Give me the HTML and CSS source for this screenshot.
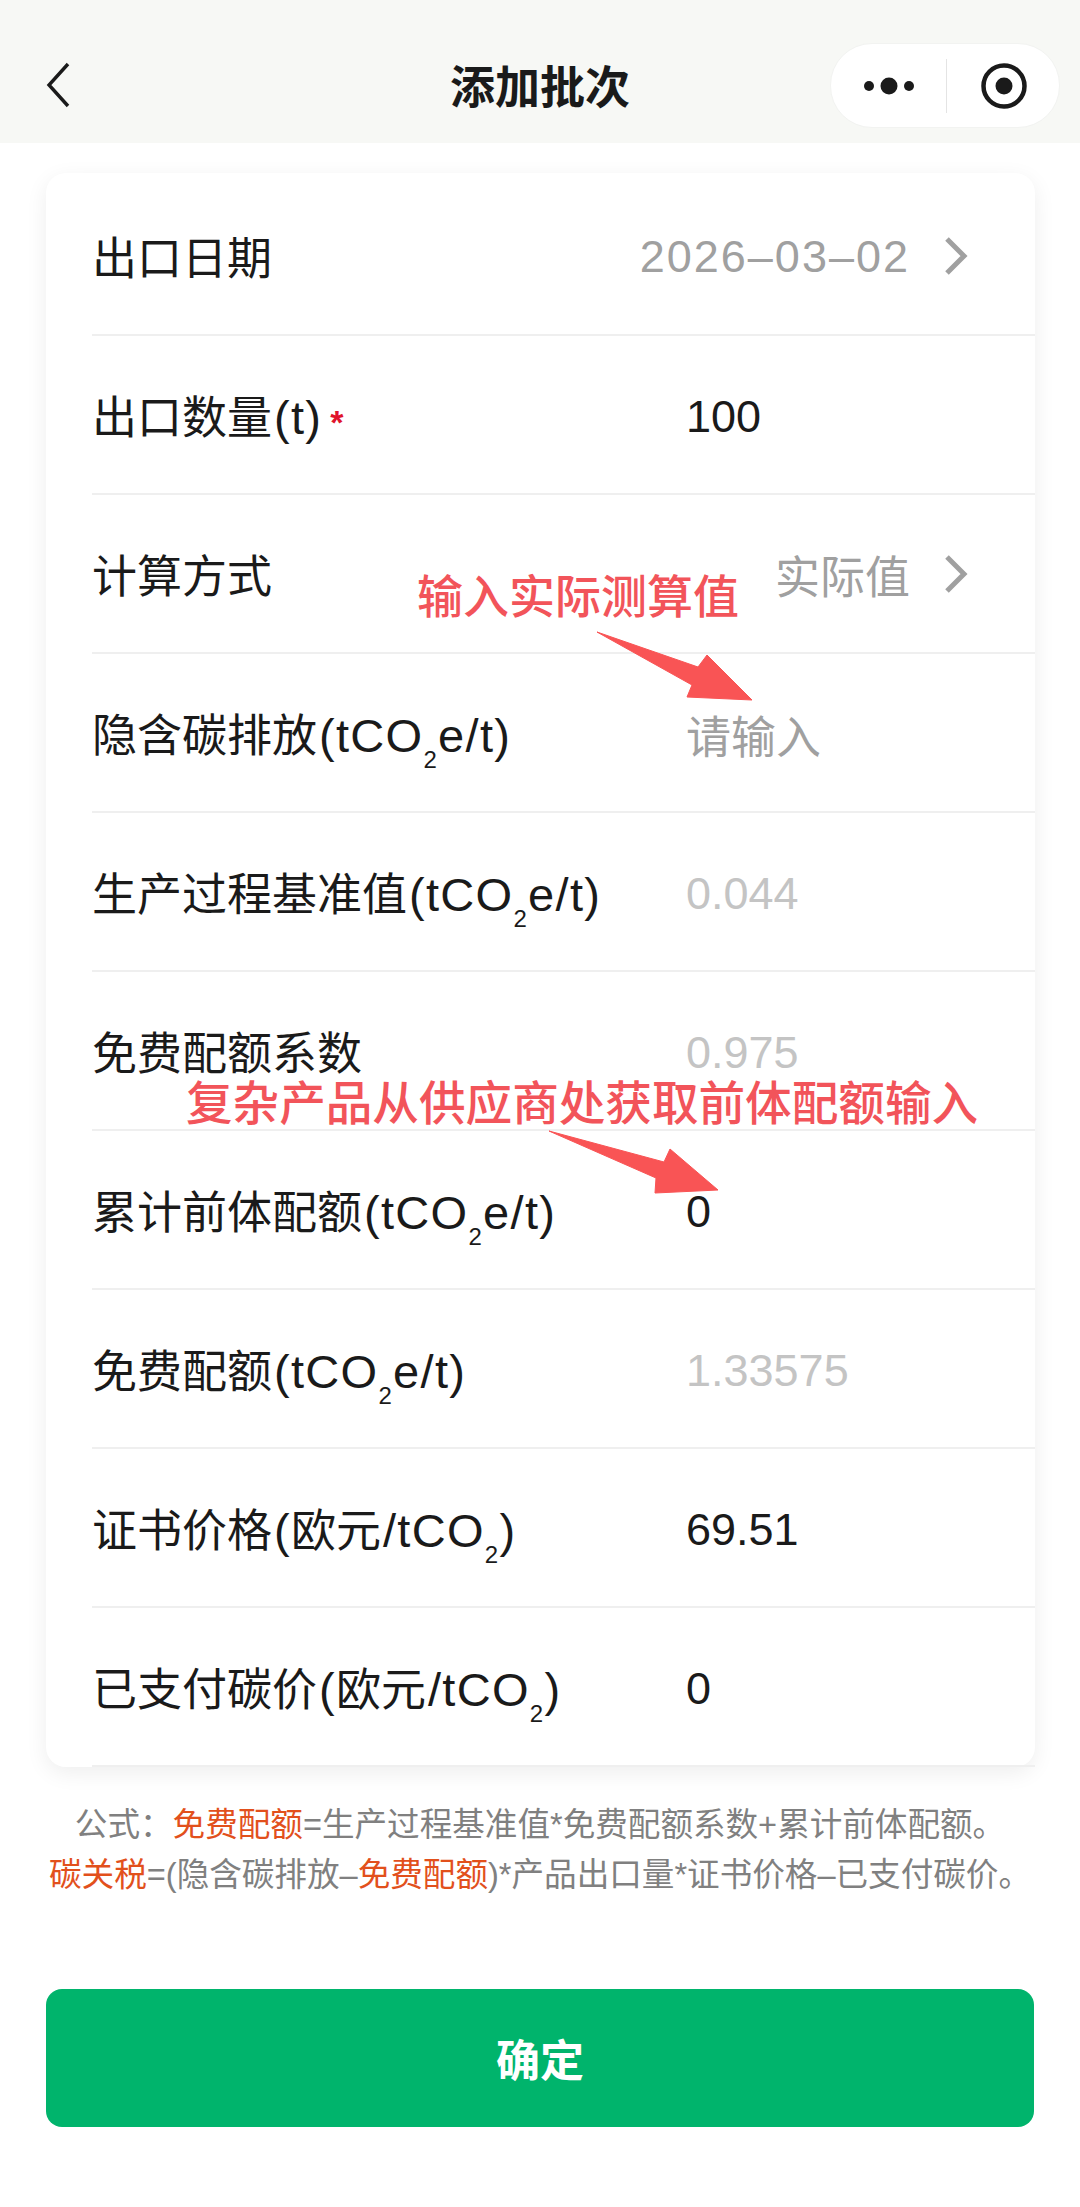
FILE: index.html
```html
<!DOCTYPE html>
<html lang="zh-CN">
<head>
    <meta charset="UTF-8">
    <meta name="viewport" content="width=device-width, initial-scale=1.0">
    <title>添加批次</title>
    <link rel="stylesheet" href="styles.css">
</head>
<body>
    <div class="page">
        <!-- Mini program title bar -->
        <header class="navbar">
            <svg class="back-icon" width="24" height="46" viewBox="0 0 24 46">
                <path d="M22 2 L3 23 L22 44" fill="none" stroke="#1a1a1a" stroke-width="3.4"/>
            </svg>
            <h1>添加批次</h1>
            <div class="capsule">
                <svg class="capsule-more" width="50" height="20" viewBox="0 0 50 20">
                    <circle cx="5" cy="10" r="5" fill="#1a1a1a"/>
                    <circle cx="25" cy="10" r="8.5" fill="#1a1a1a"/>
                    <circle cx="45" cy="10" r="5" fill="#1a1a1a"/>
                </svg>
                <span class="capsule-line"></span>
                <svg class="capsule-close" width="46" height="46" viewBox="0 0 46 46">
                    <circle cx="23" cy="23" r="20.5" fill="none" stroke="#1a1a1a" stroke-width="4.5"/>
                    <circle cx="23" cy="23" r="8.5" fill="#1a1a1a"/>
                </svg>
            </div>
        </header>

        <!-- Batch form -->
        <section class="card">
            <div class="row row-picker">
                <span class="label">出口日期</span>
                <span class="value muted date">2026–03–02</span>
                <svg class="chevron" width="26" height="38" viewBox="0 0 26 38">
                    <path d="M4 2 L21 19 L4 36" fill="none" stroke="#a0a0a0" stroke-width="5"/>
                </svg>
            </div>
            <div class="row">
                <span class="label">出口数量<span class="unit">(t)</span><em class="required">*</em></span>
                <span class="value">100</span>
            </div>
            <div class="row row-picker">
                <span class="label">计算方式</span>
                <span class="value muted">实际值</span>
                <svg class="chevron" width="26" height="38" viewBox="0 0 26 38">
                    <path d="M4 2 L21 19 L4 36" fill="none" stroke="#a0a0a0" stroke-width="5"/>
                </svg>
            </div>
            <div class="row">
                <span class="label">隐含碳排放<span class="unit">(tCO<sub>2</sub>e/t)</span></span>
                <span class="value muted">请输入</span>
            </div>
            <div class="row">
                <span class="label">生产过程基准值<span class="unit">(tCO<sub>2</sub>e/t)</span></span>
                <span class="value disabled">0.044</span>
            </div>
            <div class="row">
                <span class="label">免费配额系数</span>
                <span class="value disabled">0.975</span>
            </div>
            <div class="row">
                <span class="label">累计前体配额<span class="unit">(tCO<sub>2</sub>e/t)</span></span>
                <span class="value">0</span>
            </div>
            <div class="row">
                <span class="label">免费配额<span class="unit">(tCO<sub>2</sub>e/t)</span></span>
                <span class="value disabled">1.33575</span>
            </div>
            <div class="row">
                <span class="label">证书价格<span class="unit">(</span>欧元<span class="unit">/tCO<sub>2</sub>)</span></span>
                <span class="value">69.51</span>
            </div>
            <div class="row">
                <span class="label">已支付碳价<span class="unit">(</span>欧元<span class="unit">/tCO<sub>2</sub>)</span></span>
                <span class="value">0</span>
            </div>
        </section>

        <p class="formula">公式：<b>免费配额</b>=生产过程基准值*免费配额系数+累计前体配额。<br><b>碳关税</b>=(隐含碳排放–<b>免费配额</b>)*产品出口量*证书价格–已支付碳价。</p>

        <button class="confirm">确定</button>

        <!-- Red notes drawn over the screenshot -->
        <div class="note note-one">输入实际测算值</div>
        <div class="note note-two">复杂产品从供应商处获取前体配额输入</div>
        <svg class="note-arrows" width="1080" height="2207" viewBox="0 0 1080 2207">
            <path d="M597 632 L698 667 L707 655 L752 700 L687 697 L692 685 Z" fill="#f95455" stroke="#f95455" stroke-linejoin="round"/>
            <path d="M549 1131 L664 1162 L670 1149 L718 1190 L655 1193 L656 1178 Z" fill="#f95455" stroke="#f95455" stroke-linejoin="round"/>
        </svg>
    </div>
</body>
</html>
```

FILE: styles.css
```css
* {
    margin: 0;
    padding: 0;
    box-sizing: border-box;
}

body {
    font-family: "Liberation Sans", "Noto Sans CJK SC", sans-serif;
    background-color: #fff;
    color: #1a1a1a;
}

.page {
    position: relative;
    width: 1080px;
    height: 2207px;
    overflow: hidden;
}

/* Title bar */
.navbar {
    position: relative;
    display: flex;
    align-items: center;
    justify-content: center;
    height: 143px;
    padding-top: 26px;
    background-color: #f7f8f5;
}

.navbar h1 {
    font-size: 45px;
    font-weight: 700;
}

.back-icon {
    position: absolute;
    left: 46px;
    top: 62px;
}

.capsule {
    position: absolute;
    left: 830px;
    top: 43px;
    display: flex;
    align-items: center;
    width: 230px;
    height: 85px;
    padding-left: 33px;
    background-color: #fff;
    border: 1px solid #f2f3f1;
    border-radius: 42px;
}

.capsule-line {
    width: 1px;
    height: 54px;
    margin: 0 34px 0 32px;
    background-color: #e4e4e4;
}

/* Form card */
.card {
    margin: 30px 45px 0 46px;
    padding: 4px 0 0 46px;
    height: 1594px;
    background-color: #fff;
    border-radius: 20px;
    box-shadow: 0 6px 22px rgba(0, 0, 0, 0.07);
}

.row {
    display: flex;
    align-items: center;
    height: 159px;
    border-bottom: 2px solid #efefef;
    font-size: 45px;
}

.label {
    width: 594px;
    flex-shrink: 0;
    font-size: 45px;
    white-space: nowrap;
}

.unit {
    margin-left: 2px;
    font-size: 47px;
    letter-spacing: 1.3px;
}

.unit sub {
    font-size: 24px;
    line-height: 0;
    vertical-align: -16px;
}

.required {
    margin-left: 8px;
    color: #e0142c;
    font-size: 34px;
    font-style: normal;
    font-weight: 700;
}

.value {
    flex: 1;
    padding-top: 4px;
}

/* Rows with a picker: value sits against the chevron */
.row-picker .label {
    width: auto;
    flex: 1;
}

.row-picker .value {
    flex: none;
    padding-top: 2px;
    white-space: nowrap;
}

.value.date {
    letter-spacing: 2px;
}

.muted {
    color: #a0a0a0;
}

.disabled {
    color: #c4c4c4;
}

.chevron {
    margin: 0 66px 0 33px;
    flex-shrink: 0;
}

/* Formula note */
.formula {
    margin-top: 33px;
    font-size: 32.6px;
    line-height: 50px;
    color: #808080;
    text-align: center;
    white-space: nowrap;
}

.formula b {
    color: #e2501c;
    font-weight: 400;
}

/* Confirm button */
.confirm {
    display: block;
    width: 988px;
    height: 138px;
    margin: 89px 0 0 46px;
    background-color: #00b46c;
    color: #fff;
    font-family: inherit;
    font-size: 44px;
    font-weight: 700;
    border: none;
    border-radius: 16px;
}

/* Annotations over the form */
.note {
    position: absolute;
    color: #f2545a;
    font-size: 46px;
    font-weight: 500;
    line-height: 1;
    white-space: nowrap;
}

.note-one {
    left: 417px;
    top: 574px;
}

.note-two {
    left: 186px;
    top: 1081px;
    font-size: 46.6px;
}

.note-arrows {
    position: absolute;
    left: 0;
    top: 0;
}
```
